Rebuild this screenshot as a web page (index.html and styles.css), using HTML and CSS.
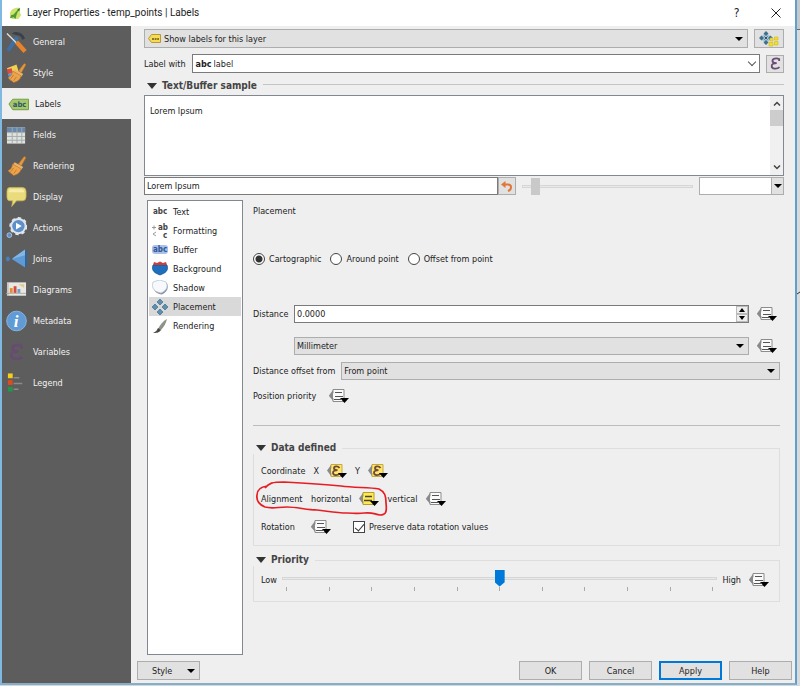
FILE: index.html
```html
<!DOCTYPE html>
<html lang="en">
<head>
    <meta charset="UTF-8">
    <meta name="viewport" content="width=device-width, initial-scale=1.0">
    <title>Layer Properties - temp_points | Labels</title>
    <link rel="stylesheet" href="styles.css">
</head>
<body>
    <!-- shared icons -->
    <svg class="sprite" aria-hidden="true">
        <symbol id="dd" viewBox="0 0 20 16">
            <path d="M5 3v10L0 8z" fill="#8a8a8a"/>
            <path d="M4 1.500h11v12H4v-3L2 8l2-3z" fill="#fafafa" stroke="#8c8c8c"/>
            <path d="M4 2v11L0 7.500z" fill="#8a8a8a"/>
            <path d="M6 4.500h7M6 8.500h8M5 11.500h7" stroke="#555"/>
            <path d="M11 10h9l-4.500 5z" fill="#000"/>
        </symbol>
        <symbol id="dd-on" viewBox="0 0 20 16">
            <path d="M4 1.500h11v12H4v-3L2 8l2-3z" fill="#ffe94e" stroke="#b39b35"/>
            <path d="M4 2v11L0 7.500z" fill="#8a8a8a"/>
            <path d="M6 5.500h7M5 9.500h8" stroke="#444" stroke-width="1.500"/>
            <path d="M11 10h9l-4.500 5z" fill="#000"/>
        </symbol>
        <symbol id="dd-expr" viewBox="0 0 20 16">
            <path d="M4 1.500h11v12H4v-3L2 8l2-3z" fill="#ffe56a" stroke="#c7a83c"/>
            <path d="M4 2v11L0 7.500z" fill="#8a8a8a"/>
            <path d="M12.500 5C11 2.500 6.500 3 7 5.500c.2 1.300 2 1.700 3.500 1.700C8 7.200 6 8 6 9.800c0 3 5 2.700 6.500.7" fill="none" stroke="#6d4a3a" stroke-width="1.800"/>
            <path d="M11 10h9l-4.500 5z" fill="#000"/>
        </symbol>
        <symbol id="epsilon" viewBox="0 0 16 16">
            <path d="M12.500 5V2.500C9 1 4 2 4.300 5c.2 1.800 2.500 2.500 5.200 2.500C6 7.500 3.300 8.700 3.300 11c0 4 6.700 4 9.700 1.500" fill="none" stroke="currentColor" stroke-width="2.200"/>
        </symbol>
        <symbol id="diamonds" viewBox="0 0 16 16">
            <path d="M8 0l3 3-3 3-3-3zM8 10l3 3-3 3-3-3zM3 5l3 3-3 3-3-3zM13 5l3 3-3 3-3-3z" fill="#5d8fb0" stroke="#37617f" stroke-width=".6"/>
        </symbol>
        <symbol id="brush" viewBox="0 0 22 22">
            <path d="M13 9l6-8 2 1-5 9z" fill="#e09a45" stroke="#b56b20" stroke-width=".6"/>
            <path d="M9 7l9 5-2 3-9-5z" fill="#e9b36a"/>
            <path d="M7 9l9 5c-1 4-4 6-8 7l-6-5c3-1 4-3 5-7z" fill="#eda24c" stroke="#b8742c" stroke-width=".6"/>
            <path d="M8 13l-3 4M11 15l-3 4" stroke="#c47a2c"/>
        </symbol>
    </svg>

    <div class="window">
        <header class="titlebar">
            <svg class="app-icon" viewBox="0 0 14 14">
                <path d="M1 8C1 3 6 0 12 1l-1 3 2 5-3 4H3z" fill="#cde36a"/>
                <path d="M2 9l3-1 6-7-3 8-1 4-2-2-4 1z" fill="#4f9a32"/>
                <path d="M9 3l3-2-1 4z" fill="#2f6f2c"/>
            </svg>
            <h1>Layer Properties - temp_points | Labels</h1>
            <button class="caption" type="button" aria-label="Context help">?</button>
            <button class="caption" type="button" aria-label="Close">
                <svg width="10" height="10" viewBox="0 0 10 10"><path d="M.5.5l9 9M9.500.5l-9 9" stroke="#222" fill="none"/></svg>
            </button>
        </header>

        <div class="body">
            <nav class="sidebar">
                <a href="#general">
                    <svg viewBox="0 0 22 22"><path d="M6 2c5-3 11-1 14 5l-3 2c-1-4-3-5-6-5z" fill="#39424a"/><path d="M12 6L2 20" stroke="#3d6fa8" stroke-width="4"/><path d="M1 2l10 10" stroke="#dcdcdc" stroke-width="1.500"/><path d="M11 11l9 10" stroke="#e8832a" stroke-width="4.500"/></svg>
                    General
                </a>
                <a href="#style">
                    <svg viewBox="0 0 22 22"><path d="M1 6l10-4 3 10-8 6z" fill="#f1d250"/><path d="M1 7l5-1 1 5-5 1z" fill="#dd4a45"/><path d="M2 12l5-1 3 5-6 3z" fill="#5a99d8"/><use href="#brush"/></svg>
                    Style
                </a>
                <a href="#labels" class="active">
                    <svg viewBox="0 0 22 22"><path d="M1 11l4-5h16.500v11H5z" fill="#a5c96a" stroke="#6f9b40"/><text x="5" y="14" class="tag-text">abc</text></svg>
                    Labels
                </a>
                <a href="#fields">
                    <svg viewBox="0 0 22 22"><path d="M1 3h19v17H1z" fill="#dfe3e0"/><path d="M1 3h19v5H1z" fill="#6688ad"/><path d="M1 8.500h19M1 12.500h19M1 16.500h19M6.500 3v17M11.500 3v17M16.500 3v17" stroke="#a3aaa9"/></svg>
                    Fields
                </a>
                <a href="#rendering"><svg><use href="#brush"/></svg>Rendering</a>
                <a href="#display">
                    <svg viewBox="0 0 22 22"><path d="M4 1h13q4 0 4 4v6q0 4-4 4h-6l-5 6 1-6H4q-3 0-3-4V5q0-4 3-4z" fill="#eadb7c" stroke="#c8b44c" stroke-width=".8"/><path d="M5 3h11q3 0 3 3H3q0-3 2-3z" fill="#f6edab"/></svg>
                    Display
                </a>
                <a href="#actions">
                    <svg viewBox="0 0 22 22"><circle cx="13" cy="9" r="7.500" fill="#5d8fca" stroke="#dfe5ea" stroke-width="2"/><circle cx="13" cy="9" r="8.500" fill="none" stroke="#dfe5ea" stroke-width="2" stroke-dasharray="3.500 3"/><path d="M10.500 5.500l6 3.500-6 3.500z" fill="#fff"/><circle cx="3.500" cy="18.500" r="2.500" fill="#5d8fca" stroke="#a9c0d6"/></svg>
                    Actions
                </a>
                <a href="#joins">
                    <svg viewBox="0 0 22 22"><path d="M0 10q2-3 4 0v2q-2 3-4 0z" fill="#477fb8"/><path d="M6 11L20 1v19z" fill="#5d9ad6"/><path d="M6 11L20 1v6z" fill="#84b6e5"/><path d="M20 1l2 2v15l-2 2z" fill="#2d659d"/></svg>
                    Joins
                </a>
                <a href="#diagrams">
                    <svg viewBox="0 0 22 22"><path d="M1 3h20v14H1z" fill="#e9e7e2"/><path d="M2 3v14M0 14.500h21" stroke="#aaa"/><path d="M4 9h3v5H4z" fill="#e28d35"/><path d="M8 7h3v7H8z" fill="#d54a3c"/><path d="M12 10h3v4h-3z" fill="#6f9dcc"/><path d="M13 5h6v4z" fill="#e5c98b"/></svg>
                    Diagrams
                </a>
                <a href="#metadata">
                    <svg viewBox="0 0 22 22"><circle cx="11" cy="11" r="10.300" fill="#609bd6" stroke="#8ab6e2"/><text x="8" y="17" class="info-text">i</text></svg>
                    Metadata
                </a>
                <a href="#variables"><svg class="purple dim"><use href="#epsilon"/></svg>Variables</a>
                <a href="#legend">
                    <svg viewBox="0 0 22 22"><path d="M2 1h5v5H2z" fill="#f7cf16"/><path d="M2 8h5v5H2z" fill="#df4b1f"/><path d="M2 15h5v5H2z" fill="#25944a"/><path d="M8 5.500h6M8 11.500h9M8 17.500h5" stroke="#8c8c8c" stroke-width="1.500"/></svg>
                    Legend
                </a>
            </nav>

            <main class="main">
                <div class="row mode-row">
                    <div class="combo with-icon">
                        <svg class="lead" width="13" height="9" viewBox="0 0 13 9"><path d="M.5 4.500l3-4h9v8h-9z" fill="#f6dc55" stroke="#b89a30"/><path d="M4 5h7" stroke="#8b762b" stroke-width="2" stroke-dasharray="2 .6"/></svg>
                        <select aria-label="Label mode"><option>Show labels for this layer</option></select>
                    </div>
                    <button class="tool wide" type="button" aria-label="Automated placement settings">
                        <svg width="20" height="16" viewBox="0 0 20 16"><path d="M7 1l6 6-6 6-6-6z" fill="#a9c4d4"/><path d="M7 0l2.500 2.500L7 5 4.500 2.500zM7 9l2.500 2.500L7 14l-2.500-2.500zM2.500 4.500L5 7 2.500 9.500 0 7zM11.500 4.500L14 7l-2.500 2.500L9 7z" fill="#41708f"/><path d="M5.500 5.500l3 3M8.500 5.500l-3 3" stroke="#2f5269"/><path d="M11 7h3v3h-3zM15.500 6H19v3h-3.500zM10 11.500h4V15h-4zM15.500 10.500H19V14h-3.500z" fill="#f3df2b" stroke="#cdb91d" stroke-width=".6"/></svg>
                    </button>
                </div>

                <div class="row label-row">
                    <label for="field">Label with</label>
                    <div class="combo editable">
                        <b class="lead">abc</b>
                        <select id="field"><option>label</option></select>
                    </div>
                    <button class="tool" type="button" aria-label="Expression"><svg class="purple" width="13" height="13"><use href="#epsilon"/></svg></button>
                </div>

                <h2 class="group-title sample-title">Text/Buffer sample</h2>
                <div class="sample">
                    <p>Lorem Ipsum</p>
                    <div class="scrollbar">
                        <svg width="8" height="5" viewBox="0 0 8 5"><path d="M1 4.500l3-3 3 3" fill="none" stroke="#444" stroke-width="1.500"/></svg>
                        <span class="scroll-thumb"></span>
                        <svg width="8" height="5" viewBox="0 0 8 5"><path d="M1 .5l3 3 3-3" fill="none" stroke="#444" stroke-width="1.500"/></svg>
                    </div>
                </div>
                <div class="row preview-row">
                    <input class="text" type="text" value="Lorem Ipsum" aria-label="Sample text">
                    <button class="tool" type="button" aria-label="Reset sample text">
                        <svg width="12" height="12" viewBox="0 0 12 12"><path d="M3 4.500h4c4 0 4 5 0 6.500" fill="none" stroke="#e0763a" stroke-width="2"/><path d="M0 4.500L4.500 1v7z" fill="#e0763a"/></svg>
                    </button>
                    <input class="size-slider" type="range" min="0" max="100" value="5" aria-label="Sample size">
                    <div class="combo color"><select aria-label="Sample background"><option></option></select></div>
                </div>

                <div class="pages">
                    <ul class="page-list">
                        <li><a href="#text"><svg viewBox="0 0 16 16"><text x="1" y="10" class="mini-text">abc</text></svg>Text</a></li>
                        <li><a href="#formatting"><svg viewBox="0 0 16 16"><path d="M0 4.500h4M2 2.500v4M4 9l-3 2 3 2" fill="none" stroke="#999"/><text x="6" y="7" class="mini-text">ab</text><text x="11" y="15" class="mini-text">c</text></svg>Formatting</a></li>
                        <li><a href="#buffer"><svg viewBox="0 0 16 16"><rect y="3" width="16" height="9" rx="3" fill="#a9c1e8"/><text x="1" y="10" class="mini-text blue">abc</text></svg>Buffer</a></li>
                        <li><a href="#background"><svg viewBox="0 0 16 16"><path d="M1 4h14c2 6-2 8-7 10C3 12-1 10 1 4z" fill="#1f6fbd" stroke="#184f8b" stroke-width=".7"/><path d="M1 4l1-3 3 1L8 .5 11 2l3-1 1 3z" fill="#cf3e34"/></svg>Background</a></li>
                        <li><a href="#shadow"><svg viewBox="0 0 16 16"><path d="M2 3l3-1 3-1 3 1 4 1c2 6 0 9-5 11.500C4 14 0 10 2 3z" fill="#8794a8"/><path d="M1 2l3-1 4-1 3 1 3 1c3 6-1 9-5 11C3 12-1 9 1 2z" fill="#f7f9fc" stroke="#b5bfce" stroke-width=".7"/></svg>Shadow</a></li>
                        <li class="current"><a href="#placement"><svg><use href="#diamonds"/></svg>Placement</a></li>
                        <li><a href="#render"><svg viewBox="0 0 16 16"><path d="M15 1c-4 2-7 6-9 10l3 1c3-3 5-7 6-11z" fill="#8b938a"/><path d="M6 10l3 2c-2 3-5 3-8 3 3-1 4-3 5-5z" fill="#454a44"/></svg>Rendering</a></li>
                    </ul>

                    <section class="placement">
                        <h3>Placement</h3>
                        <div class="row radios">
                            <label><input type="radio" name="mode" checked>Cartographic</label>
                            <label><input type="radio" name="mode">Around point</label>
                            <label><input type="radio" name="mode">Offset from point</label>
                        </div>

                        <div class="distance">
                            <label for="distance">Distance</label>
                            <div class="spin">
                                <input id="distance" class="text" type="text" value="0.0000">
                                <div class="steps">
                                    <button type="button" aria-label="Increase"><svg width="6" height="4" viewBox="0 0 6 4"><path d="M3 0l3 4H0z"/></svg></button>
                                    <button type="button" aria-label="Decrease"><svg width="6" height="4" viewBox="0 0 6 4"><path d="M0 0h6L3 4z"/></svg></button>
                                </div>
                            </div>
                            <button class="dd" type="button" aria-label="Distance override"><svg><use href="#dd"/></svg></button>
                            <div class="combo unit"><select aria-label="Distance unit"><option>Millimeter</option></select></div>
                            <button class="dd" type="button" aria-label="Unit override"><svg><use href="#dd"/></svg></button>
                        </div>
                        <div class="row offset-row">
                            <label for="offset">Distance offset from</label>
                            <div class="combo"><select id="offset"><option>From point</option></select></div>
                        </div>
                        <div class="row position-row">
                            <span>Position priority</span>
                            <button class="dd" type="button" aria-label="Position priority override"><svg><use href="#dd"/></svg></button>
                        </div>
                        <hr>

                        <fieldset class="data">
                            <legend class="group-title">Data defined</legend>
                            <div class="row">
                                <span class="name">Coordinate</span>
                                <span>X</span>
                                <button class="dd" type="button" aria-label="X"><svg><use href="#dd-expr"/></svg></button>
                                <span>Y</span>
                                <button class="dd" type="button" aria-label="Y"><svg><use href="#dd-expr"/></svg></button>
                            </div>
                            <div class="row marked">
                                <span class="name">Alignment</span>
                                <span>horizontal</span>
                                <button class="dd" type="button" aria-label="Horizontal alignment"><svg><use href="#dd-on"/></svg></button>
                                <span>vertical</span>
                                <button class="dd" type="button" aria-label="Vertical alignment"><svg><use href="#dd"/></svg></button>
                                <svg class="scribble" viewBox="0 0 134 38"><path d="M10 9C14 4 17 3 29 3c20 1 38 2 57 4 14 2 28 1 38 3 6 3 7 7 7 14 1 9 0 12-6 12-6-1-8-3-16-2-6 1-11 0-17 0-11 0-20-2-30-3-10 0-20-3-30-3-9 0-15 2-22 0-5-2-9-5-8-12 0-5 3-8 10-9" fill="none" stroke="#e81d24" stroke-width="1.700"/></svg>
                            </div>
                            <div class="row">
                                <span class="name">Rotation</span>
                                <button class="dd" type="button" aria-label="Rotation"><svg><use href="#dd"/></svg></button>
                                <label class="check"><input type="checkbox" checked>Preserve data rotation values</label>
                            </div>
                        </fieldset>

                        <fieldset class="priority">
                            <legend class="group-title">Priority</legend>
                            <div class="row">
                                <label for="priority">Low</label>
                                <div class="scale">
                                    <input id="priority" type="range" min="0" max="10" value="5">
                                    <div class="ticks"><i></i><i></i><i></i><i></i><i></i><i></i><i></i><i></i><i></i><i></i><i></i></div>
                                </div>
                                <span>High</span>
                                <button class="dd" type="button" aria-label="Priority override"><svg><use href="#dd"/></svg></button>
                            </div>
                        </fieldset>
                    </section>
                </div>

                <footer class="footer">
                    <button class="btn menu" type="button">Style</button>
                    <button class="btn" type="button">OK</button>
                    <button class="btn" type="button">Cancel</button>
                    <button class="btn default" type="button">Apply</button>
                    <button class="btn" type="button">Help</button>
                </footer>
            </main>
        </div>
    </div>
    <div class="desktop">
        <svg width="3" height="4" viewBox="0 0 3 4"><path d="M0 3l3-2" stroke="#333"/></svg>
    </div>
</body>
</html>
```

FILE: styles.css
```css
* {
    box-sizing: border-box;
}
body {
    margin: 0;
    min-height: 100vh;
    display: flex;
    padding-bottom: 1px;
    background-color: #c9dbe6;
    font-family: "DejaVu Sans Condensed", "DejaVu Sans", sans-serif;
    font-size: 9px;
    line-height: 12px;
    color: #222;
}
button, input, select {
    font: inherit;
    color: inherit;
    margin: 0;
}
a {
    color: inherit;
    text-decoration: none;
}
svg {
    display: block;
    flex: none;
}
.sprite {
    display: none;
}
.window {
    flex: 1;
    min-width: 0;
    display: flex;
    flex-direction: column;
    border: solid #5f9fce;
    border-width: 0 2px 2px;
    border-left-color: #7fb8e0;
    border-bottom-color: #8badc4;
    background-color: #efefef;
}
.desktop {
    width: 3px;
    background: linear-gradient(#c6c9cc 29px, #667 29px, #667 30px, #dadada 30px);
    padding-top: 291px;
}

/* title bar */
.titlebar {
    display: flex;
    align-items: center;
    height: 26px;
    padding-left: 7px;
    background-color: #fff;
}
.app-icon {
    width: 13px;
    height: 13px;
}
.titlebar h1 {
    flex: 1;
    margin: 0 0 0 5px;
    font: 10px/14px Roboto, sans-serif;
}
.caption {
    width: 39px;
    height: 26px;
    padding: 0;
    border: none;
    background: none;
    display: flex;
    align-items: center;
    justify-content: center;
    font-size: 12px;
}

.body {
    flex: 1;
    display: flex;
}

/* sidebar */
.sidebar {
    width: 129px;
    flex: none;
    background-color: #5d5d5d;
    color: #f2f2f2;
}
.sidebar a {
    display: flex;
    align-items: center;
    gap: 6px;
    height: 31px;
    padding-top: 1px;
    padding-left: 4px;
}
.sidebar svg {
    width: 21px;
    height: 22px;
}
.sidebar a.active {
    padding-left: 6px;
    background-color: #efefef;
    color: #222;
}
.tag-text {
    font-size: 8px;
    font-weight: bold;
    fill: #31586a;
}
.info-text {
    font: italic bold 18px "Liberation Serif", serif;
    fill: #fff;
}
.purple {
    color: #684a72;
}
.sidebar .dim {
    height: 18px;
}

/* main column */
.main {
    flex: 1;
    min-width: 0;
    display: flex;
    flex-direction: column;
    padding: 3px 3px 3px 6px;
}
.row {
    display: flex;
    align-items: center;
}
.mode-row, .label-row, .sample, .preview-row {
    margin-left: 7px;
    margin-right: 8px;
}
.mode-row, .label-row {
    gap: 6px;
}
.label-row {
    margin-top: 6px;
}
.combo {
    flex: 1;
    min-width: 0;
    display: grid;
    align-items: center;
}
.combo > * {
    grid-area: 1 / 1;
}
.combo select {
    appearance: none;
    width: 100%;
    height: 18px;
    padding: 0 16px 0 2px;
    border: 1px solid #adadad;
    border-radius: 0;
    background-color: #e1e1e1;
}
.combo::after {
    content: "";
    grid-area: 1 / 1;
    justify-self: end;
    margin-right: 5px;
    border: solid transparent;
    border-width: 4px 4px 0;
    border-top-color: #000;
    pointer-events: none;
}
.combo .lead {
    z-index: 1;
    justify-self: start;
    margin-left: 4px;
    pointer-events: none;
}
.mode-row select, .mode-row .tool {
    height: 19px;
}
.combo.with-icon select {
    padding-left: 19px;
}
.combo.editable select {
    height: 19px;
    padding-left: 21px;
    border-color: #7a7a7a;
    background-color: #fff;
}
.editable::after {
    width: 5px;
    height: 5px;
    border: solid #555;
    border-width: 0 1px 1px 0;
    margin-bottom: 3px;
    transform: rotate(45deg);
}
.tool {
    width: 18px;
    height: 18px;
    padding: 0;
    display: flex;
    align-items: center;
    justify-content: center;
    border: 1px solid #adadad;
    background-color: #e1e1e1;
}
.tool.wide {
    width: 30px;
}
.group-title {
    margin: 0;
    padding: 0;
    display: flex;
    align-items: center;
    font-size: 10px;
    font-weight: bold;
    color: #444;
}
.group-title::before {
    content: "";
    margin: 0 5px 0 3px;
    border: solid transparent;
    border-width: 6px 5px 0;
    border-top-color: #333;
}
.sample-title {
    margin: 7px 8px 3px 7px;
}
.sample-title::after {
    content: "";
    flex: 1;
    height: 1px;
    margin: 0 0 4px 6px;
    background-color: #c4c4c4;
}
.sample {
    display: flex;
    height: 81px;
    border: 1px solid #828790;
    background-color: #fff;
}
.sample p {
    flex: 1;
    margin: 9px 5px;
}
.scrollbar {
    width: 13px;
    display: flex;
    flex-direction: column;
    align-items: center;
    padding: 5px 0;
    background-color: #f0f0f0;
}
.scroll-thumb {
    width: 13px;
    height: 16px;
    margin: 4px 0 auto;
    background-color: #cdcdcd;
}
.preview-row {
    margin-top: 1px;
}
.text {
    flex: 1;
    min-width: 0;
    height: 18px;
    padding: 0 2px;
    border: 1px solid #7a7a7a;
    background-color: #fff;
}
.preview-row .text {
    flex: 353;
}
.size-slider {
    flex: 173;
    min-width: 0;
    margin: 0 6px;
}
.combo.color {
    flex: none;
    width: 85px;
}
.color select {
    background: linear-gradient(to left, #e1e1e1 11px, #adadad 11px, #adadad 12px, #fff 12px);
}
.color::after {
    margin-right: 2px;
}

input[type="range"] {
    appearance: none;
    height: 18px;
    background: none;
}
input[type="range"]::-webkit-slider-runnable-track {
    height: 3px;
    border: 1px solid #d6d6d6;
    background-color: #e7eaea;
}
input[type="range"]::-webkit-slider-thumb {
    appearance: none;
    width: 9px;
    height: 17px;
    margin-top: -8px;
    background-color: #c9c9c9;
}

/* pages */
.pages {
    flex: 1;
    display: flex;
    gap: 10px;
    margin: 5px 12px 6px 10px;
}
.page-list {
    width: 96px;
    flex: none;
    margin: 0;
    padding: 1px;
    list-style: none;
    border: 1px solid #828790;
    background-color: #fff;
}
.page-list a {
    display: flex;
    align-items: center;
    gap: 5px;
    height: 19px;
    padding-left: 3px;
}
.page-list svg {
    width: 16px;
    height: 16px;
}
.current {
    background-color: #d9d9d9;
}
.mini-text {
    font-size: 8px;
    font-weight: bold;
    fill: #444;
}
.mini-text.blue {
    fill: #2f5597;
}
.placement {
    flex: 1;
    min-width: 0;
}
.placement h3 {
    margin: 5px 0 36px;
    font-size: 9px;
    font-weight: normal;
}
.radios {
    gap: 9px;
}
.radios label, .check {
    display: flex;
    align-items: center;
    gap: 4px;
}
.radios input {
    appearance: none;
    width: 12px;
    height: 12px;
    border: 1px solid #444;
    border-radius: 50%;
    background-color: #fff;
}
.radios input:checked {
    background: radial-gradient(circle, #333 3px, #fff 4px);
}
.distance {
    display: grid;
    grid-template-columns: 41px 1fr 23px;
    align-items: center;
    row-gap: 14px;
    margin-top: 40px;
}
.distance .dd {
    justify-self: end;
    margin-right: 3px;
}
.distance .spin, .distance .combo {
    margin-right: 8px;
}
.unit {
    grid-column: 2;
}
.spin {
    display: flex;
    border: 1px solid #7a7a7a;
    background-color: #fff;
}
.spin .text {
    height: 16px;
    border: none;
}
.steps {
    width: 12px;
    display: flex;
    flex-direction: column;
}
.steps button {
    flex: 1;
    padding: 0;
    display: flex;
    align-items: center;
    justify-content: center;
    border: 1px solid #bbb;
    background-color: #eee;
}
.dd {
    padding: 0;
    border: none;
    background: none;
}
.dd svg {
    width: 20px;
    height: 16px;
}
.offset-row {
    gap: 6px;
    margin-top: 7px;
}
.position-row {
    gap: 13px;
    margin-top: 8px;
}
hr {
    height: 1px;
    margin: 21px 0 16px;
    border: none;
    background-color: #bcbcbc;
}
fieldset {
    min-width: 0;
    margin: 0;
    padding: 0 7px;
    border: 1px solid #dedede;
}
legend.group-title {
    margin-left: -8px;
    padding-right: 6px;
}
.data .row {
    gap: 8px;
    height: 28px;
}
.data .row:nth-of-type(1) {
    margin-top: 3px;
}
.data .row:last-child {
    margin-bottom: 4px;
}
.name {
    min-width: 42px;
}
.marked {
    position: relative;
}
/* hand-drawn loop over the horizontal alignment control */
.scribble {
    position: absolute;
    left: -6px;
    top: -6px;
    width: 134px;
    height: 38px;
    pointer-events: none;
}
.check {
    margin-left: 14px;
}
.check input {
    appearance: none;
    width: 12px;
    height: 12px;
    border: 1px solid #444;
    background-color: #fff;
    display: grid;
    place-items: center;
}
.check input:checked::after {
    content: "";
    width: 4px;
    height: 8px;
    margin-bottom: 2px;
    border: solid #333;
    border-width: 0 1px 1px 0;
    transform: rotate(40deg);
}
.priority {
    margin-top: 8px;
}
.priority .row {
    gap: 5px;
    margin: 3px 3px 10px 0;
}
.priority .dd {
    margin-left: 3px;
}
.scale {
    flex: 1;
    min-width: 0;
}
.scale input {
    display: block;
    width: 100%;
}
.scale input::-webkit-slider-thumb {
    width: 10px;
    background-color: #0078d7;
    clip-path: polygon(0 0, 100% 0, 100% 75%, 50% 100%, 0 75%);
}
.ticks {
    display: flex;
    justify-content: space-between;
    padding: 0 4px;
}
.ticks i {
    width: 1px;
    height: 4px;
    background-color: #aaa;
}

/* dialog buttons */
.footer {
    display: flex;
    gap: 7px;
}
.btn {
    width: 63px;
    height: 19px;
    padding: 0;
    border: 1px solid #adadad;
    background-color: #e1e1e1;
}
.btn.menu {
    display: flex;
    align-items: center;
    justify-content: space-between;
    padding: 0 4px 0 14px;
    margin-right: auto;
}
.btn.menu::after {
    content: "";
    border: solid transparent;
    border-width: 4px 4px 0;
    border-top-color: #000;
}
.btn.default {
    border: 2px solid #0078d7;
}
```
